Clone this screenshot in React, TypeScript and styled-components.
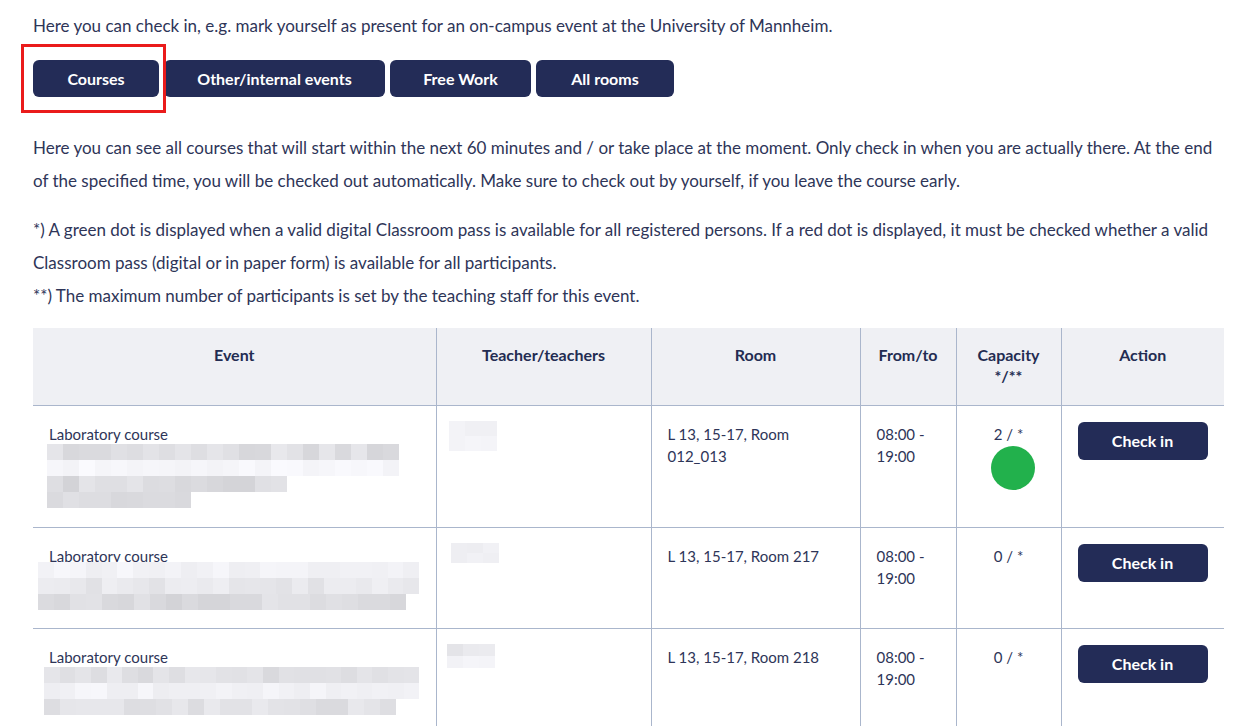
import React from "react";
import styled, { createGlobalStyle } from "styled-components";

const GlobalStyle = createGlobalStyle`
  html, body { margin: 0; padding: 0; background: #ffffff; }
  body { font-family: Lato, "Open Sans", "Liberation Sans", sans-serif; color: #2e3558; }
  * { box-sizing: border-box; }
`;

const Page = styled.div`
  padding: 9px 24px 0 33px;
  font-size: 17px;
  line-height: 33px;
`;

const Text = styled.p<{ $top?: number }>`
  margin: ${(p) => p.$top ?? 0}px 0 0 0;
  font-size: 17px;
  line-height: 33px;
  color: #2e3558;
`;

const Tabs = styled.div`
  display: flex;
  gap: 5px;
  margin-top: 18px;
`;

const TabWrap = styled.div`
  position: relative;
`;

const Highlight = styled.div`
  position: absolute;
  left: -12px;
  top: -16px;
  width: 145px;
  height: 69px;
  border: 3px solid #ea1b1b;
  pointer-events: none;
`;

const NavyButton = styled.button<{ $w: number; $h?: number }>`
  width: ${(p) => p.$w}px;
  height: ${(p) => p.$h ?? 37}px;
  border: none;
  border-radius: 6px;
  background: #232c57;
  color: #ffffff;
  font-family: inherit;
  font-weight: 700;
  font-size: 16px;
  padding: 0;
  cursor: pointer;
`;

const Table = styled.table`
  margin-top: 16px;
  width: 1191px;
  border-collapse: collapse;
  table-layout: fixed;
  font-size: 15px;
  line-height: 22px;
`;

const Th = styled.th<{ $w: number }>`
  width: ${(p) => p.$w}px;
  background: #eff0f4;
  color: #232c52;
  font-weight: 700;
  font-size: 16px;
  text-align: center;
  vertical-align: top;
  padding: 16px 16px 18px;
  height: 77px;
  line-height: 21px;
  border-left: 1px solid #aab6cc;
  border-bottom: 1px solid #aab6cc;
  &:first-child { border-left: none; }
`;

const Td = styled.td<{ $center?: boolean }>`
  vertical-align: top;
  padding: 17px 16px;
  text-align: ${(p) => (p.$center ? "center" : "left")};
  border-left: 1px solid #aab6cc;
  border-bottom: 1px solid #aab6cc;
  color: #2e3558;
  &:first-child { border-left: none; }
`;

const ActionTd = styled(Td)`
  padding-top: 16px;
`;

const Tr = styled.tr<{ $h: number }>`
  height: ${(p) => p.$h}px;
`;

const Mosaic = styled.div<{ $dx: number; $dy?: number }>`
  display: flex;
  flex-direction: column;
  margin-left: ${(p) => p.$dx}px;
  margin-top: ${(p) => p.$dy ?? 0}px;
`;

const MosaicRow = styled.div<{ $h: number }>`
  display: flex;
  height: ${(p) => p.$h}px;
`;

const Tile = styled.div`
  width: 16px;
  height: 100%;
`;

const Dot = styled.div<{ $color: string }>`
  width: 44px;
  height: 44px;
  border-radius: 50%;
  background: ${(p) => p.$color};
  margin: 1px 0 0 18px;
`;

function shade(seed: number, i: number, base: number, spread: number) {
  const x = Math.sin(seed * 97.13 + i * 12.9898) * 43758.5453;
  const f = x - Math.floor(x);
  const v = Math.round(base + (f - 0.5) * spread);
  const b = Math.min(255, v + 4);
  return `rgb(${v},${v},${b})`;
}

type RowSpec = { n: number; base: number; spread: number };

function Pixelated({ rows, dx, dy, h = 16, seed }: { rows: RowSpec[]; dx: number; dy?: number; h?: number; seed: number }) {
  return (
    <Mosaic $dx={dx} $dy={dy}>
      {rows.map((r, ri) => (
        <MosaicRow key={ri} $h={h}>
          {Array.from({ length: r.n }).map((_, i) => (
            <Tile key={i} style={{ background: shade(seed + ri * 7, i, r.base, r.spread) }} />
          ))}
        </MosaicRow>
      ))}
    </Mosaic>
  );
}

const rows = [
  {
    h: 122,
    room: ["L 13, 15-17, Room", "012_013"],
    cap: "2 / *",
    dot: true,
    event: { dx: -2, dy: -1, rows: [{ n: 22, base: 222, spread: 20 }, { n: 22, base: 246, spread: 8 }, { n: 15, base: 220, spread: 18 }, { n: 9, base: 218, spread: 12 }] },
    teacher: { dx: -4, dy: -2, h: 15, rows: [{ n: 3, base: 240, spread: 6 }, { n: 3, base: 242, spread: 6 }] },
  },
  {
    h: 101,
    room: ["L 13, 15-17, Room 217"],
    cap: "0 / *",
    dot: false,
    event: { dx: -11, dy: -5, rows: [{ n: 24, base: 242, spread: 10 }, { n: 24, base: 232, spread: 14 }, { n: 23, base: 220, spread: 18 }] },
    teacher: { dx: -2, dy: -2, h: 10, rows: [{ n: 3, base: 236, spread: 10 }, { n: 3, base: 240, spread: 10 }] },
  },
  {
    h: 110,
    room: ["L 13, 15-17, Room 218"],
    cap: "0 / *",
    dot: false,
    event: { dx: -5, dy: -1, rows: [{ n: 24, base: 224, spread: 18 }, { n: 24, base: 242, spread: 10 }, { n: 22, base: 226, spread: 16 }] },
    teacher: { dx: -6, dy: -2, h: 12, rows: [{ n: 3, base: 232, spread: 10 }, { n: 3, base: 244, spread: 8 }] },
  },
];

export default function App() {
  return (
    <>
      <GlobalStyle />
      <Page>
        <Text>Here you can check in, e.g. mark yourself as present for an on-campus event at the University of Mannheim.</Text>
        <Tabs>
          <TabWrap>
            <NavyButton $w={126}>Courses</NavyButton>
            <Highlight />
          </TabWrap>
          <NavyButton $w={221}>Other/internal events</NavyButton>
          <NavyButton $w={141}>Free Work</NavyButton>
          <NavyButton $w={138}>All rooms</NavyButton>
        </Tabs>
        <Text $top={34}>
          Here you can see all courses that will start within the next 60 minutes and / or take place at the moment. Only check in when you are actually there. At the end of the specified time, you will be checked out automatically. Make sure to check out by yourself, if you leave the course early.
        </Text>
        <Text $top={16}>
          *) A green dot is displayed when a valid digital Classroom pass is available for all registered persons. If a red dot is displayed, it must be checked whether a valid Classroom pass (digital or in paper form) is available for all participants.
          <br />
          **) The maximum number of participants is set by the teaching staff for this event.
        </Text>
        <Table>
          <thead>
            <tr>
              <Th $w={403}>Event</Th>
              <Th $w={215}>Teacher/teachers</Th>
              <Th $w={209}>Room</Th>
              <Th $w={96}>From/to</Th>
              <Th $w={105}>
                Capacity
                <br />
                */**
              </Th>
              <Th $w={163}>Action</Th>
            </tr>
          </thead>
          <tbody>
            {rows.map((r, i) => (
              <Tr key={i} $h={r.h}>
                <Td>
                  Laboratory course
                  <Pixelated seed={i * 31 + 3} dx={r.event.dx} dy={r.event.dy} rows={r.event.rows} />
                </Td>
                <Td>
                  <Pixelated seed={i * 17 + 5} dx={r.teacher.dx} dy={r.teacher.dy} h={r.teacher.h} rows={r.teacher.rows} />
                </Td>
                <Td>
                  {r.room.map((l, k) => (
                    <React.Fragment key={k}>
                      {k > 0 && <br />}
                      {l}
                    </React.Fragment>
                  ))}
                </Td>
                <Td>
                  08:00 -
                  <br />
                  19:00
                </Td>
                <Td $center>
                  {r.cap}
                  {r.dot && <Dot $color="#22b14c" />}
                </Td>
                <ActionTd>
                  <NavyButton $w={130} $h={38}>Check in</NavyButton>
                </ActionTd>
              </Tr>
            ))}
          </tbody>
        </Table>
      </Page>
    </>
  );
}
